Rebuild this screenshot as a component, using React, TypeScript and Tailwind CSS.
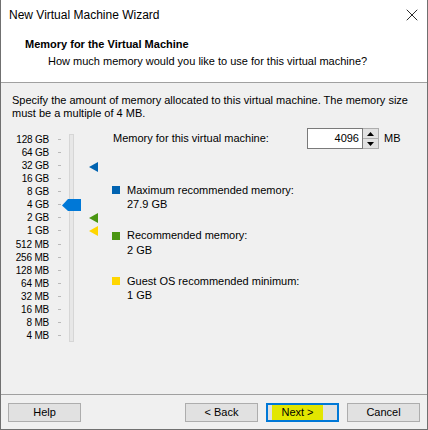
import { X } from 'lucide-react';

const sizes = [
  '128 GB', '64 GB', '32 GB', '16 GB', '8 GB', '4 GB', '2 GB', '1 GB',
  '512 MB', '256 MB', '128 MB', '64 MB', '32 MB', '16 MB', '8 MB', '4 MB',
];

const legend = [
  { color: 'bg-[#0063b1]', title: 'Maximum recommended memory:', value: '27.9 GB' },
  { color: 'bg-[#4a9612]', title: 'Recommended memory:', value: '2 GB' },
  { color: 'bg-[#ffd600]', title: 'Guest OS recommended minimum:', value: '1 GB' },
];

function Marker({ top, fill }: { top: number; fill: string }) {
  return (
    <svg className="absolute left-[40px]" style={{ top }} width="9" height="10" viewBox="0 0 9 10">
      <polygon points="0,5 9,0 9,10" fill={fill} />
    </svg>
  );
}

function MemorySlider() {
  return (
    <div className="relative w-[63px] h-[215px] flex">
      {/* tick marks, one per size label */}
      <div className="ml-[9px] pt-[4.5px] flex flex-col">
        {sizes.map((s) => (
          <div key={s} className="h-[13.13px] flex items-center">
            <div className="w-[3px] h-[1px] bg-[#b9b9b9]" />
          </div>
        ))}
      </div>
      <div className="ml-[8px] mt-[6px] w-[5px] h-[208px] bg-[#e7e7e7] border border-[#d6d6d6]" />

      {/* thumb sits on 4 GB */}
      <svg className="absolute left-[13px] top-[71px]" width="20" height="13" viewBox="0 0 20 13">
        <polygon points="0,6.5 6,0 19,0 19,12 6,12" fill="#0078d7" />
      </svg>

      <Marker top={34} fill="#0063b1" />
      <Marker top={85} fill="#4a9612" />
      <Marker top={98} fill="#ffd600" />
    </div>
  );
}

export default function App() {
  return (
    <div className="w-[428px] h-[430px] flex flex-col bg-white border-x border-b border-[#707070] text-black font-['Liberation_Sans',Arial,sans-serif] text-[11px]">
      {/* title bar */}
      <div className="h-[30px] flex items-center justify-between pl-[8px] pr-[5px]">
        <span className="text-[12px]">New Virtual Machine Wizard</span>
        <X size={20} strokeWidth={1} className="text-black" />
      </div>

      {/* page header */}
      <div className="h-[53px] border-b border-[#a0a0a0] pt-[7px] leading-[14px]">
        <div className="pl-[24px] font-bold">Memory for the Virtual Machine</div>
        <div className="pl-[47px] mt-[3px]">How much memory would you like to use for this virtual machine?</div>
      </div>

      {/* body */}
      <div className="h-[311px] bg-[#f0f0f0] px-[11px] pt-[11px] leading-[13px]">
        <p>
          Specify the amount of memory allocated to this virtual machine. The memory size
          <br />
          must be a multiple of 4 MB.
        </p>

        <div className="mt-[8px] flex">
          <div className="w-[37px] pt-[4.5px] flex flex-col items-end text-[10px] tracking-[-0.2px]">
            {sizes.map((s) => (
              <div key={s} className="h-[13.13px] flex items-center whitespace-nowrap">{s}</div>
            ))}
          </div>

          <MemorySlider />

          <div className="flex flex-col">
            <div className="h-[21px] flex items-center">
              <span className="w-[195px] pl-[1px]">Memory for this virtual machine:</span>
              <div className="w-[56px] h-[21px] bg-white border border-[#7a7a7a] flex items-center justify-end pr-[3px]">4096</div>
              <div className="w-[16px] h-[21px] border border-l-0 border-[#adadad] flex flex-col">
                <div className="flex-1 bg-[#e1e1e1] border-b border-[#adadad] flex items-center justify-center">
                  <svg width="7" height="4" viewBox="0 0 7 4"><polygon points="0,4 3.5,0 7,4" fill="#000" /></svg>
                </div>
                <div className="flex-1 bg-[#e1e1e1] flex items-center justify-center">
                  <svg width="7" height="4" viewBox="0 0 7 4"><polygon points="0,0 3.5,4 7,0" fill="#000" /></svg>
                </div>
              </div>
              <span className="ml-[5px]">MB</span>
            </div>

            <div className="mt-[34.5px] flex flex-col">
              {legend.map((l) => (
                <div key={l.title} className="h-[45.5px] flex">
                  <div className={`w-[8px] h-[8px] mt-[2.5px] ${l.color}`} />
                  <div className="ml-[7px]">
                    <div>{l.title}</div>
                    <div className="mt-[1.5px]">{l.value}</div>
                  </div>
                </div>
              ))}
            </div>
          </div>
        </div>
      </div>

      {/* buttons */}
      <div className="flex-1 bg-[#f0f0f0] border-t border-[#a0a0a0] pt-[8px] pl-[7px] pr-[7px] flex items-start">
        <button className="w-[73px] h-[19px] bg-[#e1e1e1] border border-[#adadad]">Help</button>
        <div className="flex-1" />
        <button className="w-[73px] h-[19px] bg-[#e1e1e1] border border-[#adadad]">&lt; Back</button>
        <button className="ml-[8px] w-[73px] h-[19px] bg-[#e1e1e1] border-2 border-[#0078d7] flex items-stretch justify-center">
          <span className="ml-[-10px] px-[9px] bg-[#e2e600] flex items-center">Next &gt;</span>
        </button>
        <button className="ml-[8px] w-[73px] h-[19px] bg-[#e1e1e1] border border-[#adadad]">Cancel</button>
      </div>
    </div>
  );
}
